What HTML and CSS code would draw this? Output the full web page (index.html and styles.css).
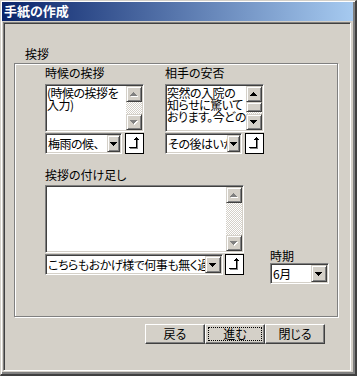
FILE: index.html
```html
<!DOCTYPE html>
<html lang="ja">
<head>
<meta charset="utf-8">
<title>手紙の作成</title>
<link rel="stylesheet" href="styles.css">
</head>
<body>
<div class="window">
  <div class="titlebar">手紙の作成</div>
  <div class="client">
    <div class="section-label">挨拶</div>
    <div class="group">
      <div class="row-top">
        <div class="field field-small">
          <div class="label">時候の挨拶</div>
          <div class="memo memo-small">
            <div class="memo-text">(時候の挨拶を<br>入力)</div>
            <div class="scrollbar">
              <div class="sb-btn"><svg width="14" height="14" viewBox="0 0 14 14" shape-rendering="crispEdges"><path fill="#fff" transform="translate(4 6)" d="M3 0h1v1h1v1h1v1h1v1H0V3h1V2h1V1h1z"/><path fill="#808080" transform="translate(3 5)" d="M3 0h1v1h1v1h1v1h1v1H0V3h1V2h1V1h1z"/></svg></div>
              <div class="sb-track"></div>
              <div class="sb-btn"><svg width="14" height="14" viewBox="0 0 14 14" shape-rendering="crispEdges"><path fill="#fff" transform="translate(4 6)" d="M0 0h7v1h-1v1h-1v1h-1v1h-1V3H2V2H1V1H0z"/><path fill="#808080" transform="translate(3 5)" d="M0 0h7v1h-1v1h-1v1h-1v1h-1V3H2V2H1V1H0z"/></svg></div>
            </div>
          </div>
          <div class="combo-row">
            <div class="combo combo-small"><span class="combo-text">梅雨の候、</span><span class="drop drop-small"><svg width="11" height="15" viewBox="0 0 11 15" shape-rendering="crispEdges"><path transform="translate(2 6)" d="M0 0h7v1h-1v1h-1v1h-1v1h-1V3H2V2H1V1H0z"/></svg></span></div>
            <div class="insert-btn"><svg width="17" height="19" viewBox="0 0 17 19" shape-rendering="crispEdges"><g fill="#808080"><rect x="4" y="14" width="8" height="1"/><rect x="11" y="6" width="1" height="9"/></g><g fill="#000"><rect x="3" y="13" width="8" height="1"/><rect x="10" y="3" width="1" height="11"/><rect x="9" y="4" width="3" height="1"/><rect x="8" y="5" width="5" height="1"/></g></svg></div>
          </div>
        </div>
        <div class="field field-small">
          <div class="label">相手の安否</div>
          <div class="memo memo-small">
            <div class="memo-text">突然の入院の<br>知らせに驚いて<br>おります。今どの</div>
            <div class="scrollbar">
              <div class="sb-btn"><svg width="14" height="14" viewBox="0 0 14 14" shape-rendering="crispEdges"><path transform="translate(3 5)" d="M3 0h1v1h1v1h1v1h1v1H0V3h1V2h1V1h1z"/></svg></div>
              <div class="sb-thumb"></div>
              <div class="sb-track"></div>
              <div class="sb-btn"><svg width="14" height="14" viewBox="0 0 14 14" shape-rendering="crispEdges"><path transform="translate(3 5)" d="M0 0h7v1h-1v1h-1v1h-1v1h-1V3H2V2H1V1H0z"/></svg></div>
            </div>
          </div>
          <div class="combo-row">
            <div class="combo combo-small"><span class="combo-text">その後はいかがお過ごしでしょうか</span><span class="drop drop-small"><svg width="11" height="15" viewBox="0 0 11 15" shape-rendering="crispEdges"><path transform="translate(2 6)" d="M0 0h7v1h-1v1h-1v1h-1v1h-1V3H2V2H1V1H0z"/></svg></span></div>
            <div class="insert-btn"><svg width="17" height="19" viewBox="0 0 17 19" shape-rendering="crispEdges"><g fill="#808080"><rect x="4" y="14" width="8" height="1"/><rect x="11" y="6" width="1" height="9"/></g><g fill="#000"><rect x="3" y="13" width="8" height="1"/><rect x="10" y="3" width="1" height="11"/><rect x="9" y="4" width="3" height="1"/><rect x="8" y="5" width="5" height="1"/></g></svg></div>
          </div>
        </div>
      </div>
      <div class="row-bottom">
        <div class="field field-wide">
          <div class="label label-wide">挨拶の付け足し</div>
          <div class="memo memo-wide">
            <div class="memo-text"></div>
            <div class="scrollbar">
              <div class="sb-btn"><svg width="14" height="14" viewBox="0 0 14 14" shape-rendering="crispEdges"><path fill="#fff" transform="translate(4 6)" d="M3 0h1v1h1v1h1v1h1v1H0V3h1V2h1V1h1z"/><path fill="#808080" transform="translate(3 5)" d="M3 0h1v1h1v1h1v1h1v1H0V3h1V2h1V1h1z"/></svg></div>
              <div class="sb-track"></div>
              <div class="sb-btn"><svg width="14" height="14" viewBox="0 0 14 14" shape-rendering="crispEdges"><path fill="#fff" transform="translate(4 6)" d="M0 0h7v1h-1v1h-1v1h-1v1h-1V3H2V2H1V1H0z"/><path fill="#808080" transform="translate(3 5)" d="M0 0h7v1h-1v1h-1v1h-1v1h-1V3H2V2H1V1H0z"/></svg></div>
            </div>
          </div>
          <div class="combo-row combo-row-wide">
            <div class="combo combo-wide"><span class="combo-text">こちらもおかげ様で何事も無く過ごしております</span><span class="drop"><svg width="14" height="15" viewBox="0 0 14 15" shape-rendering="crispEdges"><path transform="translate(3 6)" d="M0 0h7v1h-1v1h-1v1h-1v1h-1V3H2V2H1V1H0z"/></svg></span></div>
            <div class="insert-btn"><svg width="17" height="19" viewBox="0 0 17 19" shape-rendering="crispEdges"><g fill="#808080"><rect x="4" y="14" width="8" height="1"/><rect x="11" y="6" width="1" height="9"/></g><g fill="#000"><rect x="3" y="13" width="8" height="1"/><rect x="10" y="3" width="1" height="11"/><rect x="9" y="4" width="3" height="1"/><rect x="8" y="5" width="5" height="1"/></g></svg></div>
          </div>
        </div>
        <div class="field field-period">
          <div class="label label-period">時期</div>
          <div class="combo combo-period"><span class="combo-text">6月</span><span class="drop"><svg width="14" height="15" viewBox="0 0 14 15" shape-rendering="crispEdges"><path transform="translate(3 6)" d="M0 0h7v1h-1v1h-1v1h-1v1h-1V3H2V2H1V1H0z"/></svg></span></div>
        </div>
      </div>
    </div>
    <div class="buttons">
      <div class="btn">戻る</div>
      <div class="btn btn-focus">進む</div>
      <div class="btn">閉じる</div>
    </div>
  </div>
</div>
</body>
</html>
```
FILE: styles.css
```css
* { box-sizing: border-box; }
html, body { margin: 0; padding: 0; }
body {
  width: 357px;
  height: 376px;
  overflow: hidden;
  background: #d4d0c8;
  color: #000;
  font-family: "Noto Sans CJK JP", "Noto Sans", sans-serif;
  font-size: 12px;
  line-height: 14px;
  font-feature-settings: "palt";
}
svg { display: block; }

.window {
  width: 357px;
  height: 376px;
  display: flex;
  flex-direction: column;
  border-style: solid;
  border-width: 1px 2px 2px 1px;
  border-color: #d4d0c8 #404040 #404040 #d4d0c8;
  box-shadow: inset 1px 1px #fff, inset -2px -2px #808080;
  padding: 1px 2px 3px 1px;
}

.titlebar {
  flex: none;
  height: 19px;
  padding-left: 2px;
  background: linear-gradient(to right, #0a246a, #a6caf0);
  color: #fff;
  font-size: 13px;
  font-weight: bold;
  line-height: 17px;
  white-space: nowrap;
}

.client {
  flex: 1;
  margin: 1px 2px 0 1px;
  border: 1px solid;
  border-color: #808080 #fff #fff #808080;
  box-shadow: inset 1px 1px #404040;
  display: flex;
  flex-direction: column;
  align-items: flex-start;
}

.section-label { margin: 24px 0 0 21px; white-space: nowrap; }

.group {
  margin: 2px 0 0 10px;
  width: 324px;
  height: 254px;
  border: 1px solid #808080;
  box-shadow: inset 1px 1px #fff, 1px 1px #fff;
  padding: 2px 0 0 30px;
}

.row-top { display: flex; gap: 21px; }
.row-bottom { display: flex; align-items: flex-start; margin-top: 14px; }

.field { display: flex; flex-direction: column; align-items: flex-start; }
.field-small { width: 99px; }
.field-wide { width: 199px; }
.field-period { margin: 81px 0 0 26px; }

.label { height: 14px; margin-bottom: 4px; white-space: nowrap; }
.label-wide { margin-bottom: 3px; }
.label-period { margin-bottom: 0; }

.memo, .combo {
  background: #fff;
  border: 1px solid;
  border-color: #808080 #fff #fff #808080;
  box-shadow: inset 1px 1px #404040, inset -1px -1px #d4d0c8;
  padding: 1px;
  display: flex;
}
.memo-small { width: 99px; height: 48px; }
.memo-wide { width: 199px; height: 68px; }

.memo-text {
  flex: 1;
  min-width: 0;
  overflow: hidden;
  white-space: nowrap;
  line-height: 12px;
  padding-top: 1px;
  letter-spacing: -0.5px;
}

.scrollbar { flex: none; width: 16px; display: flex; flex-direction: column; }

.sb-btn, .sb-thumb, .drop {
  background: #d4d0c8;
  border: 1px solid;
  border-color: #d4d0c8 #404040 #404040 #d4d0c8;
  box-shadow: inset 1px 1px #fff, inset -1px -1px #808080;
}
.sb-btn { flex: none; height: 16px; }
.sb-thumb { flex: none; height: 10px; }
.sb-track {
  flex: 1;
  background: repeating-conic-gradient(#fff 0 25%, #d4d0c8 0 50%) 0 0 / 2px 2px;
}

.combo-row { display: flex; margin-top: 1px; }
.combo { height: 21px; }
.combo-small { width: 77px; }
.combo-wide { width: 178px; }
.combo-period { width: 59px; }
.combo-text {
  flex: 1;
  min-width: 0;
  overflow: hidden;
  white-space: nowrap;
  line-height: 17px;
  padding-left: 1px;
  letter-spacing: -0.5px;
}
.drop { flex: none; width: 16px; }
.drop-small { width: 13px; }

.insert-btn {
  flex: none;
  width: 19px;
  height: 21px;
  margin-left: 3px;
  border: 1px solid #000;
  background: #fff;
}
.combo-row-wide .insert-btn { margin-left: 2px; }

.buttons {
  align-self: stretch;
  display: flex;
  justify-content: flex-end;
  margin-top: 7px;
  padding-right: 25px;
}
.btn {
  width: 60px;
  height: 20px;
  text-align: center;
  line-height: 18px;
  border: 1px solid;
  border-color: #fff #404040 #404040 #fff;
  box-shadow: inset -1px -1px #808080;
  white-space: nowrap;
}
.btn-focus { outline: 1px dotted #000; outline-offset: -4px; }
```
